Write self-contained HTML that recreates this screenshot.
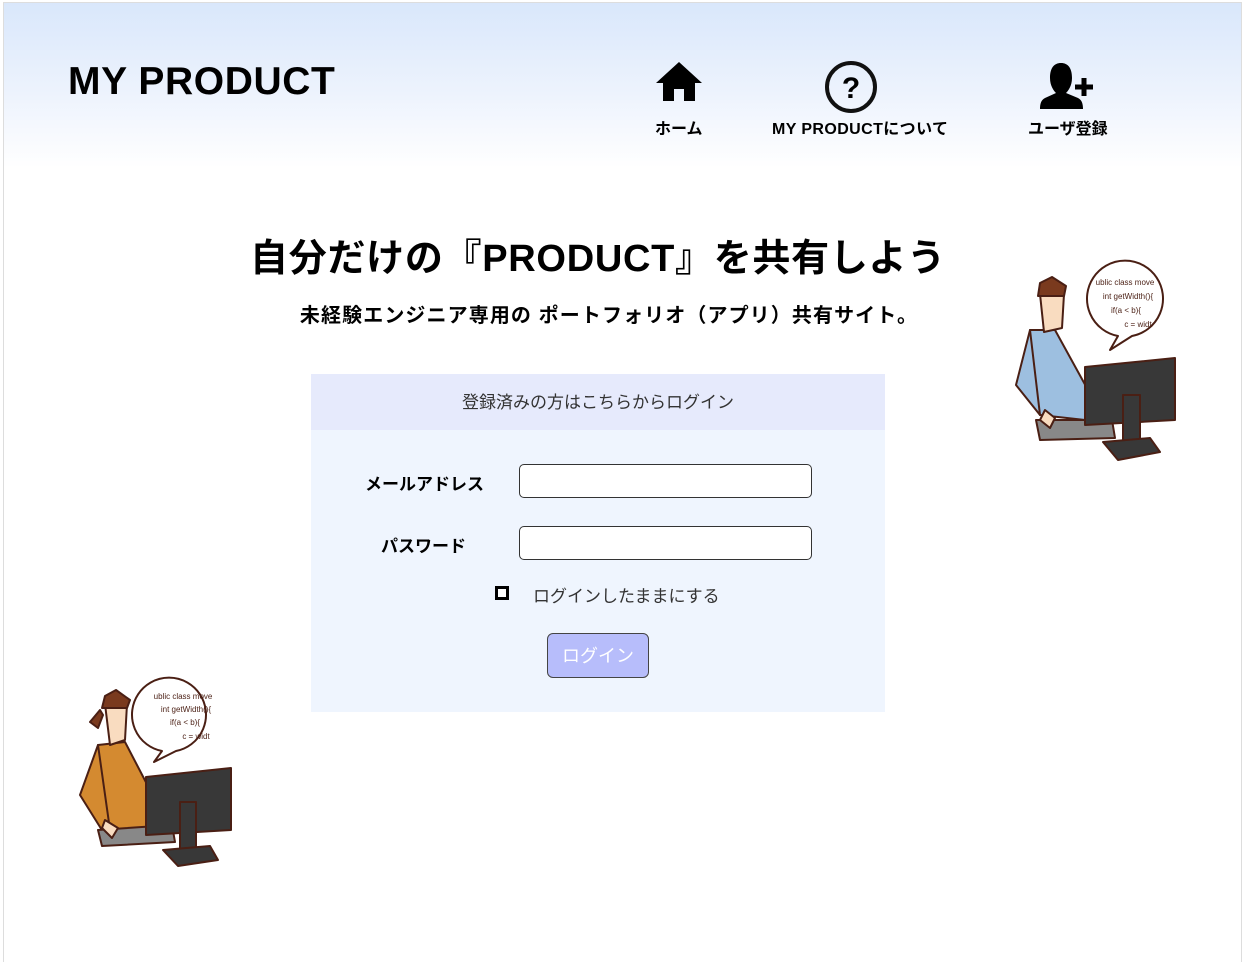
<!DOCTYPE html>
<html><head><meta charset="utf-8">
<style>
*{margin:0;padding:0;box-sizing:border-box}
body{width:1244px;height:957px;background:#fff;font-family:"Liberation Sans","Noto Sans CJK JP",sans-serif;position:relative;overflow:hidden}
.frame{position:absolute;left:3px;top:2px;width:1239px;height:960px;border:1px solid #ddd;border-bottom:none}
.hdr{position:absolute;left:4px;top:3px;width:1237px;height:165px;background:linear-gradient(#d9e7fb,#edf3fd 55%,#fff)}
.logo{position:absolute;left:68px;top:60px;font-size:39px;font-weight:bold;letter-spacing:0.6px}
.nav{position:absolute;top:115px;font-size:16px;font-weight:bold;white-space:nowrap}
.abs{position:absolute}
h1{position:absolute;left:0;width:1196px;top:227px;text-align:center;font-size:38px;font-weight:bold;letter-spacing:0.7px}
.sub{position:absolute;left:0;width:1218px;top:299px;text-align:center;font-size:20px;font-weight:bold;letter-spacing:1.1px}
.box{position:absolute;left:311px;top:374px;width:574px;height:338px;background:#eff5fe}
.bh{height:56px;background:#e6eafc;text-align:center;font-size:17px;line-height:58px;color:#333}
.lbl{position:absolute;font-size:17px;font-weight:bold}
.inp{position:absolute;width:293px;height:34px;background:#fff;border:1px solid #333;border-radius:5px}
.btn{position:absolute;left:236px;top:259px;width:102px;height:45px;background:#b7bdfb;border:1px solid #444;border-radius:6px;color:#fff;font-size:18px;text-align:center;line-height:45px}
</style></head><body>
<div class="hdr"></div>
<div class="frame"></div>
<div class="logo">MY PRODUCT</div>
<svg class="abs" style="left:655px;top:61px" width="48" height="40" viewBox="0 0 48 40"><path d="M24 1 L47 22 H40 V40 H29 V28 H19 V40 H8 V22 H1 Z" fill="#000"/></svg>
<div class="nav" style="left:655px">ホーム</div>
<svg class="abs" style="left:824px;top:60px" width="54" height="54" viewBox="0 0 54 54"><circle cx="27" cy="27" r="24" fill="none" stroke="#111" stroke-width="4"/><text x="27" y="38" text-anchor="middle" font-family="Liberation Sans" font-weight="bold" font-size="30">?</text></svg>
<div class="nav" style="left:772px;letter-spacing:0.4px">MY PRODUCTについて</div>
<svg class="abs" style="left:1040px;top:62px" width="56" height="48" viewBox="0 0 56 48"><path d="M10 16 C10 6 14 1 21 1 C28 1 32 6 32 16 C32 24 28 29 26 31 L38 36 C42 38 43 42 43 47 H0 C0 42 1 38 5 36 L16 31 C14 29 10 24 10 16Z" fill="#000"/><path d="M44 16 V34 M35 25 H53" stroke="#000" stroke-width="5"/></svg>
<div class="nav" style="left:1028px">ユーザ登録</div>

<h1>自分だけの『PRODUCT』を共有しよう</h1>
<div class="sub">未経験エンジニア専用の ポートフォリオ（アプリ）共有サイト。</div>

<div class="box">
<div class="bh">登録済みの方はこちらからログイン</div>
<div class="lbl" style="left:54px;top:96px">メールアドレス</div>
<div class="inp" style="left:208px;top:90px"></div>
<div class="lbl" style="left:70px;top:158px">パスワード</div>
<div class="inp" style="left:208px;top:152px"></div>
<div class="abs" style="left:184px;top:212px;width:14px;height:14px;border:3px solid #000;background:#fff"></div>
<div class="abs" style="left:222px;top:208px;font-size:17px;color:#333">ログインしたままにする</div>
<div class="btn">ログイン</div>
</div>

<!-- right illustration -->
<svg class="abs" style="left:1000px;top:250px" width="200" height="220" viewBox="0 0 200 220">
<g stroke="#4a1f14" stroke-width="2" stroke-linejoin="round">
<path d="M118 86 A38 38 0 1 1 132 86 L110 100 Z" fill="#fff"/>
<path d="M30 80 L16 135 L40 165 L60 150 L55 90 Z" fill="#9dbfe0"/>
<path d="M55 80 L88 140 L85 170 L40 165 L30 80 Z" fill="#9dbfe0"/>
<path d="M40 44 H64 L62 78 L44 82 Z" fill="#f9dcc0"/>
<path d="M38 46 L40 33 L52 27 L66 36 L64 46 Z" fill="#7a3a1e"/>
<path d="M36 170 L112 170 L115 188 L40 190 Z" fill="#888"/>
<path d="M45 160 L55 168 L50 178 L40 170 Z" fill="#f9dcc0"/>
<path d="M85 117 L175 108 L175 170 L85 175 Z" fill="#383838"/>
<path d="M123 145 H140 V197 H123 Z" fill="#383838"/>
<path d="M103 192 L150 188 L160 202 L118 210 Z" fill="#383838"/>
</g>
<g font-family="Liberation Sans" font-size="8" fill="#4a1f14" text-anchor="middle"><text x="125" y="35">ublic class move</text><text x="128" y="49">int getWidth(){</text><text x="126" y="63">if(a &lt; b){</text><text x="138" y="77">c = widt</text></g>
</svg>
<!-- left illustration -->
<svg class="abs" style="left:70px;top:670px" width="170" height="200" viewBox="0 0 170 200">
<g stroke="#4a1f14" stroke-width="2" stroke-linejoin="round">
<path d="M92 81 A37 37 0 1 1 106 81 L84 92 Z" fill="#fff"/>
<path d="M28 75 L10 125 L35 165 L60 155 L58 80 Z" fill="#d48a30"/>
<path d="M55 72 L80 120 L78 160 L40 160 L28 75 Z" fill="#d48a30"/>
<path d="M35 34 H57 L55 70 L40 75 Z" fill="#f9dcc0"/>
<path d="M32 38 L35 26 L46 20 L60 30 L57 38 Z M30 40 L20 52 L28 58 L33 45 Z" fill="#7a3a1e"/>
<path d="M28 160 L102 155 L105 172 L32 176 Z" fill="#888"/>
<path d="M35 150 L48 158 L42 168 L32 158 Z" fill="#f9dcc0"/>
<path d="M76 107 L161 98 L161 160 L76 165 Z" fill="#383838"/>
<path d="M110 132 H126 V185 H110 Z" fill="#383838"/>
<path d="M93 180 L140 176 L148 190 L108 196 Z" fill="#383838"/>
</g>
<g font-family="Liberation Sans" font-size="8" fill="#4a1f14" text-anchor="middle"><text x="113" y="29">ublic class move</text><text x="116" y="42">int getWidth(){</text><text x="115" y="55">if(a &lt; b){</text><text x="126" y="69">c = widt</text></g>
</svg>
</body></html>
